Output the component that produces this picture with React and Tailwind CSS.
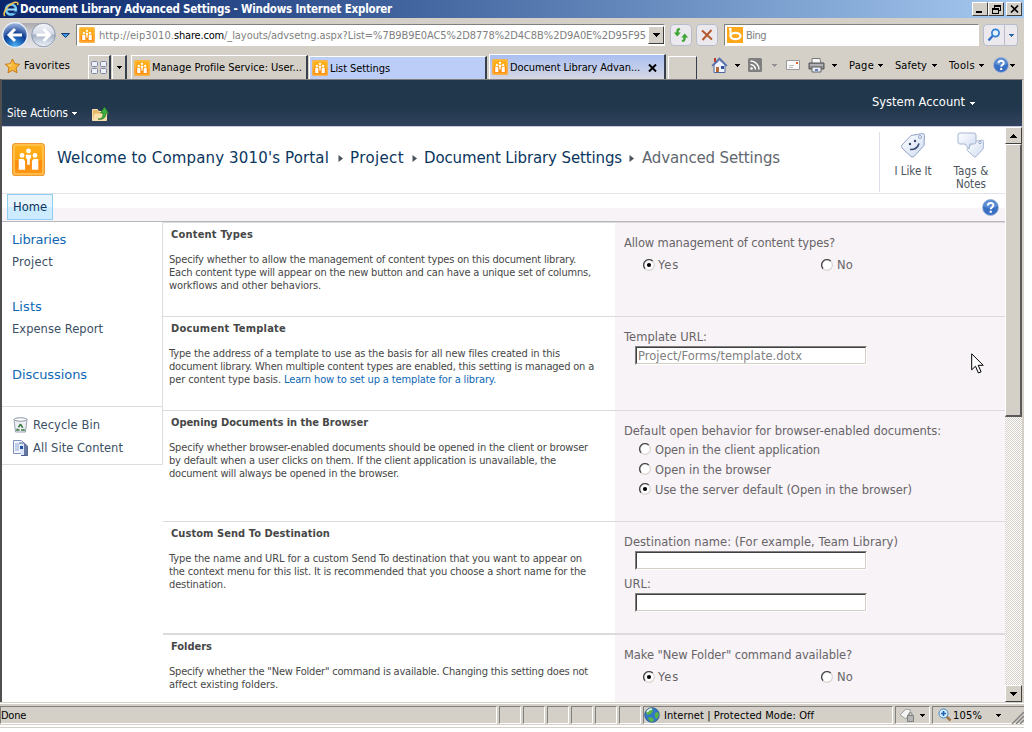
import { useLayoutEffect, useRef } from "react";

const TAHOMA = "font-['DejaVu_Sans_Condensed','DejaVu_Sans',sans-serif] [font-stretch:condensed]";
const VERDANA = "font-['DejaVu_Sans',sans-serif] [font-stretch:normal]";

/* One line of text whose letter spacing is adjusted to fill `w` pixels. */
function Fit({ w, className = "", children }) {
  const ref = useRef(null);
  useLayoutEffect(() => {
    const el = ref.current;
    el.style.letterSpacing = "0px";
    const natural = el.getBoundingClientRect().width;
    el.style.letterSpacing = `${(w - natural) / el.textContent.length}px`;
  }, [w, children]);
  return (
    <span ref={ref} className={`inline-block shrink-0 whitespace-pre ${className}`}>
      {children}
    </span>
  );
}

function Caret({ className = "" }) {
  return (
    <svg className={`shrink-0 ${className}`} width="5" height="3" viewBox="0 0 5 3" shapeRendering="crispEdges">
      <path d="M0 0h5v1H4v1H3v1H2V2H1V1H0z" fill="currentColor" />
    </svg>
  );
}

function SiteIcon({ size, className = "" }) {
  return (
    <svg className={`shrink-0 ${className}`} width={size} height={size} viewBox="0 0 32 32">
      <defs>
        <linearGradient id="site" x1="0" y1="0" x2="0" y2="1">
          <stop offset="0" stopColor="#ffb21c" />
          <stop offset="0.5" stopColor="#ffa512" />
          <stop offset="0.55" stopColor="#ff8a08" />
          <stop offset="1" stopColor="#ff981a" />
        </linearGradient>
      </defs>
      <rect x="0.5" y="0.5" width="31" height="31" rx="3" fill="url(#site)" stroke="#f09a30" />
      <rect x="2" y="2" width="28" height="28" rx="2" fill="none" stroke="#ffc75a" strokeWidth="1.500" />
      <g fill="#fff">
        <circle cx="16" cy="7.700" r="2.300" />
        <path d="M13.500 11.500h5v3l-1.200 1V21h-2.600v-5.500l-1.200-1z" />
        <circle cx="9.700" cy="12" r="2.300" />
        <circle cx="22.300" cy="12" r="2.300" />
        <path d="M6.500 15.500H11l1.700 2v8.500H6.500zM25.500 15.500H21l-1.700 2v8.500h6.200z" />
      </g>
    </svg>
  );
}

function IeLogo() {
  return (
    <svg className="shrink-0" width="16" height="16" viewBox="0 0 16 16">
      <circle cx="8" cy="8.500" r="5" fill="none" stroke="#6fc6f5" strokeWidth="2.600" />
      <path d="M4 8.500h9" stroke="#9bdcff" strokeWidth="2" />
      <path d="M10 10.500h5v2h-5z" fill="#17397f" />
      <path d="M2 15C-1 13 4 5 9 2.500 13 .500 16 1 14.500 4" fill="none" stroke="#f6c64a" strokeWidth="1.500" />
    </svg>
  );
}

function NavButtons() {
  return (
    <svg className="shrink-0" width="72" height="30" viewBox="0 0 72 30">
      <defs>
        <radialGradient id="back" cx="0.5" cy="0.95" r="0.95">
          <stop offset="0" stopColor="#4fb4f4" />
          <stop offset="0.35" stopColor="#1b62b8" />
          <stop offset="0.55" stopColor="#123f92" />
          <stop offset="1" stopColor="#a9bfe6" />
        </radialGradient>
        <linearGradient id="fwd" x1="0" y1="0" x2="0" y2="1">
          <stop offset="0" stopColor="#f4f6fa" />
          <stop offset="0.45" stopColor="#d3dae5" />
          <stop offset="0.5" stopColor="#a5b2c6" />
          <stop offset="1" stopColor="#f0f4fa" />
        </linearGradient>
        <linearGradient id="pod" x1="0" y1="0" x2="0" y2="1">
          <stop offset="0" stopColor="#a9a9ae" />
          <stop offset="0.4" stopColor="#cfcfd3" />
          <stop offset="1" stopColor="#e6e6e8" />
        </linearGradient>
      </defs>
      <path d="M15 3h29c8 0 12 5 12 12s-5 13-12 13H15z" fill="url(#pod)" />
      <circle cx="15" cy="15" r="12.300" fill="url(#back)" stroke="#eef3fb" strokeWidth="1.200" />
      <path d="M15 9l-6 6 6 6M9.500 15H22" fill="none" stroke="#fff" strokeWidth="3" />
      <circle cx="43.500" cy="15" r="11.800" fill="url(#fwd)" stroke="#8791a5" strokeWidth="0.900" />
      <path d="M43.500 9l6 6-6 6M49 15H36.500" fill="none" stroke="#fff" strokeWidth="3" />
      <path d="M61.500 13.500h8l-4 4z" fill="#3f95e0" stroke="#123f7a" />
    </svg>
  );
}

function HelpIcon({ size }) {
  return (
    <svg className="shrink-0" width={size} height={size} viewBox="0 0 16 16">
      <circle cx="8" cy="8" r="7.500" fill="#3a70c4" stroke="#a9b9d6" strokeWidth="0.800" />
      <path d="M1.500 7a6.500 6.500 0 0 1 13 0q-6 3-13 0z" fill="#6f9fe0" opacity="0.6" />
      <path d="M5.500 6.200c0-3.400 5.200-3.200 5.200-.300 0 1.900-2.500 1.900-2.500 3.800" fill="none" stroke="#fff" strokeWidth="1.900" />
      <rect x="7.200" y="11" width="2" height="2" fill="#fff" />
    </svg>
  );
}

function TitleBar() {
  const btn =
    "flex h-[14px] w-4 items-center justify-center border border-t-white border-l-white border-r-[#404040] border-b-[#404040] bg-[#d4d0c8]";
  return (
    <div className="flex h-[18px] items-center bg-linear-to-r from-[#0a246a] to-[#a6caf0] pl-[3px]">
      <IeLogo />
      <Fit w={372} className="ml-px pt-px text-[11.500px] leading-[17px] font-bold text-white">
        Document Library Advanced Settings - Windows Internet Explorer
      </Fit>
      <div className="mr-0.5 ml-auto flex">
        <div className={btn}>
          <svg width="8" height="8" shapeRendering="crispEdges"><path d="M0 6h6v2H0z" /></svg>
        </div>
        <div className={btn}>
          <svg width="9" height="9" shapeRendering="crispEdges">
            <path d="M2.500 3V.500h6v5H6M2 1.500h7M.500 3.500h6v5h-6zM0 4.500h7" fill="none" stroke="#000" />
          </svg>
        </div>
        <div className={`${btn} ml-0.5`}>
          <svg width="9" height="8"><path d="M1 .500l7 7M8 .500l-7 7" stroke="#000" strokeWidth="1.600" /></svg>
        </div>
      </div>
    </div>
  );
}

function AddressRow() {
  const field = "flex h-[22px] items-center border border-t-[#808080] border-l-[#808080] border-r-white border-b-white bg-white";
  const btn = "flex h-[22px] items-center justify-center rounded-sm border border-[#b8bccb] bg-[#ece9ee]";
  return (
    <div className="flex h-[34px] items-center bg-[#d4d0c8]">
      <NavButtons />
      <div className={`${field} ml-1 w-[589px] pl-0.5`}>
        <SiteIcon size={16} className="mr-1" />
        <Fit w={75} className="pt-0.5 text-[11px] text-[#808080]">http://eip3010.</Fit>
        <Fit w={50} className="pt-0.5 text-[11px] text-black">share.com</Fit>
        <Fit w={422} className="pt-0.5 text-[11px] text-[#808080]">/_layouts/advsetng.aspx?List=%7B9B9E0AC5%2D8778%2D4C8B%2D9A0E%2D95F95</Fit>
        <div className="ml-auto flex h-[18px] w-4 items-center justify-center border border-t-white border-l-white border-r-[#404040] border-b-[#404040] bg-[#d4d0c8]">
          <svg width="7" height="4" shapeRendering="crispEdges"><path d="M0 0h7v1H6v1H5v1H4v1H3V3H2V2H1V1H0z" /></svg>
        </div>
      </div>
      <div className={`${btn} ml-[5px] w-[22px]`}>
        <svg width="16" height="16" viewBox="0 0 16 16" fill="#3fa535">
          <path d="M6.500 1C4 1 3.200 3 3.200 5.500H.800L4.300 9.500 7.800 5.500H5.600C5.600 4 6 3 7.500 2.500zM9.500 15c2.500 0 3.300-2 3.300-4.500h2.400L11.700 6.500 8.200 10.500h2.200c0 1.500-.400 2.500-1.900 3z" />
        </svg>
      </div>
      <div className={`${btn} ml-1 w-[22px]`}>
        <svg width="14" height="14" viewBox="0 0 14 14"><path d="M2 2.500l10 9M11.500 2l-9 10" stroke="#b5582c" strokeWidth="2" /></svg>
      </div>
      <div className={`${field} ml-1.5 w-[255px] pl-0.5`}>
        <svg width="16" height="16" viewBox="0 0 16 16">
          <rect width="16" height="16" fill="#ffa71a" />
          <path d="M2 2h1.500v7" fill="none" stroke="#fff" strokeWidth="2" />
          <ellipse cx="8.500" cy="9" rx="5" ry="3.200" fill="none" stroke="#fff" strokeWidth="2.300" />
        </svg>
        <Fit w={20} className="ml-[3px] pt-0.5 text-[11px] text-[#808080]">Bing</Fit>
      </div>
      <div className={`${btn} ml-1 w-[22px] rounded-r-none`}>
        <svg width="14" height="14" viewBox="0 0 14 14" fill="none">
          <circle cx="8.500" cy="5" r="3.600" stroke="#2f7fd6" strokeWidth="1.700" fill="#e3f2ff" />
          <path d="M5.500 8L1.500 12.500" stroke="#2f6fc6" strokeWidth="2.300" />
        </svg>
      </div>
      <div className={`${btn} w-[13px] rounded-l-none border-l-0 text-[#2667a8]`}><Caret /></div>
    </div>
  );
}

function Tab({ label, w, className = "", active = false }) {
  return (
    <div className={`flex items-center border-t border-r-2 border-l border-t-white border-r-[#35404c] border-l-white pl-0.5 ${className}`}>
      <SiteIcon size={16} className="mr-0.5" />
      <Fit w={w} className="pt-0.5 text-[11px] text-black">{label}</Fit>
      {active && (
        <svg className="mt-0.5 ml-2" width="9" height="8" viewBox="0 0 9 8"><path d="M1 .500l7 7M8 .500l-7 7" stroke="#000" strokeWidth="2" /></svg>
      )}
    </div>
  );
}

function TabRow() {
  return (
    <div className="flex h-[27px] items-end bg-[#d4d0c8] pl-1 text-[11px] text-black">
      <div className="flex h-[27px] w-[84px] items-center">
        <svg width="17" height="16" viewBox="0 0 17 16">
          <path d="M8.500 1l2.200 4.700 5 .600-3.700 3.500 1 5-4.500-2.500L4 14.800l1-5L1.300 6.300l5-.600z" fill="#f9b83a" stroke="#c97a17" />
          <path d="M8.500 2.500L7 6.500 3 7l4 1z" fill="#fde79a" />
        </svg>
        <Fit w={46} className="ml-[3px] pt-px">Favorites</Fit>
      </div>
      <div className="flex h-6 w-[23px] items-center justify-center border-t border-r-2 border-l border-t-white border-r-[#35404c] border-l-white">
        <svg width="16" height="15" viewBox="0 0 16 15" fill="#eef0f8" stroke="#7e86a5">
          <rect x="0.5" y="1.5" width="6" height="5" rx="1" />
          <rect x="9.5" y="1.5" width="6" height="5" rx="1" />
          <rect x="0.5" y="8.5" width="6" height="5" rx="1" />
          <rect x="9.500" y="8.500" width="6" height="5" rx="1" />
        </svg>
      </div>
      <div className="ml-px flex h-6 w-[15px] items-center justify-center border-t border-r-2 border-l border-t-white border-r-[#35404c] border-l-white"><Caret /></div>
      <Tab label="Manage Profile Service: User..." w={150} className="ml-[4px] h-6 w-[177px]" />
      <Tab label="List Settings" w={60} className="ml-px h-[23px] w-[178px] bg-[#bccdf7]" />
      <Tab label="Document Library Advan..." w={130} active className="ml-[2px] h-[25px] w-[177px] bg-linear-to-b from-[#a9bff2] to-[#d6d8e2]" />
      <div className="ml-[2px] h-[23px] w-[29px] border-t border-r border-l border-t-white border-r-[#35404c] border-l-white" />
      <div className="mb-1 ml-[14px] flex h-5 items-center">
        <svg width="17" height="17" viewBox="0 0 17 17">
          <path d="M3 8v7.500h11V8L8.500 3z" fill="#eef3ff" stroke="#51689c" />
          <path d="M1 9L8.500 1.500 16 9" fill="none" stroke="#5470b0" strokeWidth="1.600" />
          <path d="M3 1h2v4H3z" fill="#b64030" />
          <path d="M5 10h3v5H5z" fill="#b46b35" />
          <path d="M10 9h3v3h-3z" fill="#31529c" />
        </svg>
        <Caret className="ml-[7px]" />
        <svg className="ml-2" width="14" height="14" viewBox="0 0 14 14">
          <rect width="14" height="14" rx="1.500" fill="#7f7f7f" />
          <circle cx="3.500" cy="10.500" r="1.300" fill="#fff" />
          <path d="M2.500 6.500a5 5 0 0 1 5 5M2.500 3a8.500 8.500 0 0 1 8.500 8.500" fill="none" stroke="#fff" strokeWidth="1.500" />
        </svg>
        <Caret className="ml-[10px] text-[#909090]" />
        <svg className="ml-[9px]" width="14" height="10" viewBox="0 0 14 10">
          <path d="M.500.500h13v9H.500z" fill="#fafafa" stroke="#9a9a9a" />
          <path d="M10 2h2v2h-2z" fill="#e0602c" />
          <path d="M3 5.500h5M3 7.500h4" stroke="#bbb" />
        </svg>
        <svg className="ml-[8px]" width="17" height="16" viewBox="0 0 17 16">
          <path d="M4 1.500h8l1 5H4z" fill="#f8f8f8" stroke="#777" />
          <path d="M1 6h15v6H1z" fill="#8b8b8f" stroke="#55555a" />
          <path d="M2 8h13" stroke="#d8d8dc" />
          <path d="M4 10h9v5H4z" fill="#e9eef8" stroke="#666" />
          <path d="M7 12h3v2H7z" fill="#5f7fc0" />
        </svg>
        <Caret className="ml-[7px]" />
        <Fit w={25} className="ml-[12px] pt-0.5">Page</Fit>
        <Caret className="ml-1" />
        <Fit w={32} className="ml-[12px] pt-0.5">Safety</Fit>
        <Caret className="ml-[5px]" />
        <Fit w={26} className="ml-3 pt-0.5">Tools</Fit>
        <Caret className="mr-[9px] ml-1" />
        <HelpIcon size={16} />
        <Caret className="ml-px" />
      </div>
    </div>
  );
}

function Ribbon() {
  return (
    <div className="flex h-[47px] justify-between border-b border-[#c9cbdc] bg-linear-to-b from-[#21374c] from-60% to-[#31435d] text-white">
      <div className="flex items-start pt-[26px] pl-[5px]">
        <Fit w={61} className={`${TAHOMA} text-[11.500px] leading-[14px]`}>Site Actions</Fit>
        <Caret className="mt-[6px] ml-1" />
        <svg className="ml-[15px]" width="17" height="17" viewBox="0 0 17 17">
          <path d="M.500 3.500h5l1 2h8v9H.500z" fill="#e6b866" stroke="#f8deb0" />
          <path d="M2.500 7.500h13l-2 7H.800z" fill="#fbe0ab" />
          <path d="M6 13c4 0 5-2 5-6H8.500L12.500 1 16.500 7H14c0 5-3 7-8 6z" fill="#3fae3c" stroke="#23742a" strokeWidth="0.700" />
        </svg>
      </div>
      <div className="flex items-start pt-[15px] pr-[47px]">
        <Fit w={93} className={`${VERDANA} text-[11.500px] leading-[14px]`}>System Account</Fit>
        <Caret className="mt-[7px] ml-[5px]" />
      </div>
    </div>
  );
}

function Crumb({ w, children, className = "text-[#0b3660]" }) {
  return <Fit w={w} className={`${VERDANA} text-[15px] leading-5 ${className}`}>{children}</Fit>;
}

function CrumbArrow({ className }) {
  return (
    <svg className={`shrink-0 ${className}`} width="5" height="7"><path d="M.500 0L5 3.500.500 7z" fill="#4c535c" /></svg>
  );
}

function TagShape({ x, y, scale = 1 }) {
  return (
    <g transform={`translate(${x} ${y}) scale(${scale})`}>
      <path d="M2 13L11 3.500 22.500 1.500q2 0 2 2l-.500 10L14 24.500q-1.500 1-3 0L2 16q-1-1.500 0-3z" fill="url(#tag)" stroke="#8fa2c6" />
    </g>
  );
}

function SiteHeader() {
  return (
    <div className="flex h-[67px] border-b border-[#e3e3ea] bg-white">
      <SiteIcon size={33} className="mt-4 ml-[10px]" />
      <div className="flex items-center self-start pt-[21px] pl-3">
        <Crumb w={272}>Welcome to Company 3010's Portal</Crumb>
        <CrumbArrow className="mr-[7px] ml-[9px]" />
        <Crumb w={54}>Project</Crumb>
        <CrumbArrow className="mr-[7px] ml-2" />
        <Crumb w={198}>Document Library Settings</Crumb>
        <CrumbArrow className="mr-[8px] ml-[7px]" />
        <Crumb w={138} className="text-[#5f6770]">Advanced Settings</Crumb>
      </div>
      <div className={`${TAHOMA} mt-[5px] ml-auto flex h-[60px] w-[126px] border-l border-[#dcdee8] text-[11.500px] leading-[13px] text-[#4c535c]`}>
        <div className="flex w-[66px] flex-col items-center">
          <svg width="28" height="28" viewBox="0 0 28 28">
            <defs>
              <linearGradient id="tag" x1="0" y1="0" x2="1" y2="1">
                <stop offset="0" stopColor="#fff" />
                <stop offset="1" stopColor="#cfdcf2" />
              </linearGradient>
            </defs>
            <TagShape x={1} y={0} />
            <circle cx="21" cy="5" r="1.500" fill="#fff" stroke="#8fa2c6" />
            <circle cx="11" cy="12" r="1.200" fill="#344a72" />
            <circle cx="16" cy="9" r="1.200" fill="#344a72" />
            <path d="M11 17.500q7 .500 9-6" fill="none" stroke="#344a72" strokeWidth="1.600" />
          </svg>
          <Fit w={37} className="mt-[5px]">I Like It</Fit>
        </div>
        <div className="flex w-[50px] flex-col items-center">
          <svg width="28" height="28" viewBox="0 0 28 28">
            <TagShape x={9} y={7} scale={0.72} />
            <circle cx="23" cy="10.500" r="1.200" fill="#fff" stroke="#8fa2c6" />
            <path d="M3 1h14q2 0 2 2v7q0 2-2 2h-4l-1 5-4-5H3q-2 0-2-2V3q0-2 2-2z" fill="url(#tag)" stroke="#a5b4d0" />
          </svg>
          <Fit w={35} className="mt-[5px]">{"Tags &"}</Fit>
          <Fit w={30}>Notes</Fit>
        </div>
      </div>
    </div>
  );
}

function TopNav() {
  return (
    <div className="flex h-7 justify-between border-b border-[#b9b5bc] bg-linear-to-b from-white from-50% to-[#f7f3f7] to-50% pl-[5px]">
      <div className="flex h-[26px] w-[46px] items-center justify-center border border-[#91cdf2] bg-linear-to-b from-[#e6f4ff] from-50% to-[#ccebff] to-50%">
        <Fit w={34} className={`${VERDANA} pt-0.5 text-[11.500px] text-[#0b3660]`}>Home</Fit>
      </div>
      <div className="mt-[5px] mr-[6px]"><HelpIcon size={17} /></div>
    </div>
  );
}

function SideNav() {
  const group = "text-[13px] leading-4 text-[#0f68b5]";
  const item = "text-[11.500px] leading-4 text-[#3b4f65]";
  return (
    <div className={`${VERDANA} h-[243px] w-[161px] shrink-0 border-r border-b border-[#dbddde]`}>
      <div className="flex h-[185px] flex-col items-start border-b border-[#dbddde] pt-[10px] pl-[10px]">
        <Fit w={54} className={group}>Libraries</Fit>
        <Fit w={41} className={`${item} mt-[6px]`}>Project</Fit>
        <Fit w={30} className={`${group} mt-[29px]`}>Lists</Fit>
        <Fit w={91} className={`${item} mt-[6px]`}>Expense Report</Fit>
        <Fit w={75} className={`${group} mt-[30px]`}>Discussions</Fit>
      </div>
      <div className="flex items-center pt-[10px] pl-[11px]">
        <svg width="16" height="16" viewBox="0 0 16 16">
          <path d="M1 2.500h13l-1.500 12.500h-10z" fill="#eef0f5" stroke="#9aa2b2" />
          <ellipse cx="7.500" cy="2.500" rx="6.500" ry="1.700" fill="#fff" stroke="#8b93a5" />
          <path d="M7.500 7L4 13h7z" fill="none" stroke="#3f7c46" strokeWidth="1.600" strokeDasharray="4 1.500" />
        </svg>
        <Fit w={67} className={`${item} ml-1`}>Recycle Bin</Fit>
      </div>
      <div className="flex items-center pt-[7px] pl-[11px]">
        <svg width="16" height="16" viewBox="0 0 16 16">
          <path d="M.500.500h8l2 2v11H.500z" fill="#f2f6ff" stroke="#7f92bb" />
          <path d="M2 4h4M2 6h4M2 8h4M2 10h4" stroke="#8da5d6" />
          <path d="M6 3h5l3.500 3v9.500H8" fill="#dbe6fa" stroke="#4a5f8f" />
          <path d="M11 3v12h3.500V6z" fill="#6878a0" />
          <path d="M7 6h3v3H7z" fill="#1f4fa5" />
        </svg>
        <Fit w={90} className={`${item} ml-1`}>All Site Content</Fit>
      </div>
    </div>
  );
}

function Radio({ checked, className = "" }) {
  return (
    <svg className={`shrink-0 ${className}`} width="12" height="12" viewBox="0 0 12 12">
      <circle cx="6" cy="6" r="5" fill="#fff" />
      <path d="M2.200 9.800A5.300 5.300 0 0 1 9.800 2.200" fill="none" stroke="#4a4a4a" strokeWidth="1.400" />
      <path d="M9.800 2.200A5.300 5.300 0 0 1 2.200 9.800" fill="none" stroke="#d8d5d0" strokeWidth="1.200" />
      {checked && <circle cx="6" cy="6" r="2.100" fill="#000" />}
    </svg>
  );
}

function YesNoRow() {
  return (
    <div className="mt-[6px] flex h-4 items-center pl-[19px]">
      <div className="flex w-[178px] items-center">
        <Radio checked className="mb-px" />
        <Fit w={21} className="ml-[3px]">Yes</Fit>
      </div>
      <Radio className="mb-px" />
      <Fit w={16} className="ml-1">No</Fit>
    </div>
  );
}

function Option({ label, w, checked, className = "" }) {
  return (
    <div className={`flex h-4 items-center pl-[15px] ${className}`}>
      <Radio checked={checked} className="mb-0.5" />
      <Fit w={w} className="ml-1">{label}</Fit>
    </div>
  );
}

function TextField({ className = "", children }) {
  return (
    <div className={`ml-[11px] flex h-[19px] w-[232px] items-center border border-t-[#808080] border-r-white border-b-white border-l-[#808080] ${className}`}>
      <div className="flex h-[17px] w-[230px] items-center border border-t-[#404040] border-r-[#d4d0c8] border-b-[#d4d0c8] border-l-[#404040] bg-white pl-px text-[#808080]">
        {children}
      </div>
    </div>
  );
}

function Section({ title, titleW, lines, className, children }) {
  return (
    <section className={`flex border-[#dbdadc] ${className}`}>
      <div className={`${TAHOMA} w-[452px] shrink-0 pt-[5px] pl-1.5 text-[#474747]`}>
        <h3 className="flex pl-0.5 text-[11px] leading-[14px] font-bold">
          <Fit w={titleW}>{title}</Fit>
        </h3>
        <div className="mt-[11px] text-[11px] leading-[13px]">
          {lines.map((parts, i) => (
            <div key={i} className="flex h-[13px]">
              {parts.map(([text, w, cls]) => <Fit key={text} w={w} className={cls}>{text}</Fit>)}
            </div>
          ))}
        </div>
      </div>
      <div className={`${VERDANA} flex-1 bg-[#f7f3f7] pt-[12px] pl-[9px] text-[11.500px] leading-4 text-[#686468]`}>
        {children}
      </div>
    </section>
  );
}

function Label({ w, className = "", children }) {
  return <div className={`flex h-4 ${className}`}><Fit w={w}>{children}</Fit></div>;
}

function Settings() {
  return (
    <div className="h-[480px] min-w-0 flex-1 overflow-hidden">
      <Section
        title="Content Types" titleW={82} className="h-[94px] border-t"
        lines={[
          [["Specify whether to allow the management of content types on this document library.", 407]],
          [["Each content type will appear on the new button and can have a unique set of columns,", 422]],
          [["workflows and other behaviors.", 152]],
        ]}
      >
        <Label w={211}>Allow management of content types?</Label>
        <YesNoRow />
      </Section>
      <Section
        title="Document Template" titleW={115} className="h-[94px] border-t"
        lines={[
          [["Type the address of a template to use as the basis for all new files created in this", 391]],
          [["document library. When multiple content types are enabled, this setting is managed on a", 425]],
          [["per content type basis. ", 115], ["Learn how to set up a template for a library.", 212, "text-[#0f68b5]"]],
        ]}
      >
        <Label w={83}>Template URL:</Label>
        <TextField className="mt-px"><Fit w={164}>Project/Forms/template.dotx</Fit></TextField>
      </Section>
      <Section
        title="Opening Documents in the Browser" titleW={197} className="h-[111px] border-t"
        lines={[
          [["Specify whether browser-enabled documents should be opened in the client or browser", 419]],
          [["by default when a user clicks on them. If the client application is unavailable, the", 387]],
          [["document will always be opened in the browser.", 230]],
        ]}
      >
        <Label w={317}>Default open behavior for browser-enabled documents:</Label>
        <Option label="Open in the client application" w={165} className="mt-[3px]" />
        <Option label="Open in the browser" w={116} className="mt-[4px]" />
        <Option label="Use the server default (Open in the browser)" w={257} checked className="mt-[4px]" />
      </Section>
      <Section
        title="Custom Send To Destination" titleW={159} className="h-[112px] border-t"
        lines={[
          [["Type the name and URL for a custom Send To destination that you want to appear on", 413]],
          [["the context menu for this list. It is recommended that you choose a short name for the", 417]],
          [["destination.", 57]],
        ]}
      >
        <Label w={274}>Destination name: (For example, Team Library)</Label>
        <TextField className="mt-px" />
        <Label w={27} className="mt-[6px]">URL:</Label>
        <TextField className="mt-px" />
      </Section>
      <Section
        title="Folders" titleW={41} className="h-[70px] border-t-2"
        lines={[
          [["Specify whether the \"New Folder\" command is available. Changing this setting does not", 419]],
          [["affect existing folders.", 109]],
        ]}
      >
        <Label w={228}>Make "New Folder" command available?</Label>
        <YesNoRow />
      </Section>
    </div>
  );
}

function ScrollBar() {
  const btn = "flex h-[17px] w-[17px] shrink-0 items-center justify-center border border-t-white border-l-white border-r-[#404040] border-b-[#404040] bg-[#d4d0c8]";
  return (
    <div className="flex h-[575px] w-[17px] shrink-0 flex-col bg-[conic-gradient(#fff_25%,#d4d0c8_0_50%,#fff_0_75%,#d4d0c8_0)] bg-size-[2px_2px]">
      <div className={btn}>
        <svg width="7" height="4" shapeRendering="crispEdges"><path d="M3 0h1v1h1v1h1v1h1v1H0V3h1V2h1V1h1z" /></svg>
      </div>
      <div className="h-[273px] border-t border-r-2 border-b-2 border-l border-t-white border-r-[#5a5a5a] border-b-[#5a5a5a] border-l-white bg-[#d4d0c8]" />
      <div className={`${btn} mt-auto`}>
        <svg width="7" height="4" shapeRendering="crispEdges"><path d="M0 0h7v1H6v1H5v1H4v1H3V3H2V2H1V1H0z" /></svg>
      </div>
    </div>
  );
}

function StatusBar() {
  const panel = "flex h-[18px] items-center border border-t-[#808080] border-l-[#808080] border-r-white border-b-white";
  return (
    <div className="flex h-[26px] flex-col border-t border-[#d4d0c8] bg-[#d4d0c8] text-[11px] text-black">
      <div className="h-px bg-white" />
      <div className="mt-0.5 flex h-[18px] gap-[2px]">
        <div className={`${panel} w-[497px]`}><Fit w={25} className="pt-0.5">Done</Fit></div>
        {[0, 1, 2, 3, 4, 5].map((i) => <div key={i} className={`${panel} w-[22px]`} />)}
        <div className={`${panel} w-[250px]`}>
          <svg width="16" height="16" viewBox="0 0 16 16">
            <circle cx="8" cy="8" r="7.300" fill="#3377c8" stroke="#24518c" strokeWidth="0.800" />
            <path d="M2 5q2-4 6-4l1 3-2 3-4 1zM5 10l4 1 1 3-3 1-3-3zM11 6l3-1 1 3-2 4-2-2z" fill="#5bb544" />
            <path d="M3 5q2-3 5-3" fill="none" stroke="#e6f3ff" strokeWidth="1.500" />
          </svg>
          <Fit w={150} className="ml-1 pt-0.5">Internet | Protected Mode: Off</Fit>
        </div>
        <div className={`${panel} w-[35px] pl-[3px]`}>
          <svg width="16" height="16" viewBox="0 0 16 16">
            <path d="M1 8l6-6 5 1-5 9z" fill="#f3f3f3" stroke="#a0a0a0" />
            <path d="M8.500 8.500h6v6h-6z" fill="#b5b5b5" stroke="#808080" />
            <path d="M10 8V6.500q1.500-2 3 0V8" fill="none" stroke="#808080" />
          </svg>
          <Caret className="ml-[5px]" />
        </div>
        <div className={`${panel} flex-1 border-r-0 pl-[5px]`}>
          <svg width="15" height="15" viewBox="0 0 15 15">
            <path d="M8.500 8.500l4 4" stroke="#a0764a" strokeWidth="2.500" />
            <circle cx="5.500" cy="5.500" r="4.500" fill="#d9efff" stroke="#3f86c8" />
            <path d="M5.500 3v5M3 5.500h5" stroke="#1c5eb0" strokeWidth="1.600" />
          </svg>
          <Fit w={29} className="pt-0.5">105%</Fit>
          <Caret className="ml-[14px]" />
          <svg className="mt-1 ml-auto" width="13" height="13" viewBox="0 0 13 13" stroke="#808080" strokeWidth="1.400">
            <path d="M1 13L13 1M5 13l8-8M9 13l4-4" />
          </svg>
        </div>
      </div>
      <div className="mt-px h-[2px] bg-white" />
    </div>
  );
}

export default function App() {
  return (
    <div className="h-[732px] w-full overflow-hidden bg-white">
      <div className={`${TAHOMA} w-[1024px] cursor-default`}>
        <TitleBar />
        <AddressRow />
        <TabRow />
        <div className="h-[623px] border-t border-r-2 border-l-2 border-t-[#808080] border-r-[#d4d0c8] border-l-[#505050] bg-white">
          <Ribbon />
          <div className="flex">
            <div className="w-[1003px] shrink-0">
              <SiteHeader />
              <TopNav />
              <div className="flex">
                <SideNav />
                <Settings />
              </div>
            </div>
            <ScrollBar />
          </div>
        </div>
        <StatusBar />
      </div>
      <svg className="absolute top-[353px] left-[971px]" width="13" height="22" viewBox="0 0 13 22">
        <path d="M.700.800v16l3.800-3.600 2.900 6.800 2.700-1.200-2.900-6.500h5z" fill="#fff" stroke="#000" />
      </svg>
    </div>
  );
}
